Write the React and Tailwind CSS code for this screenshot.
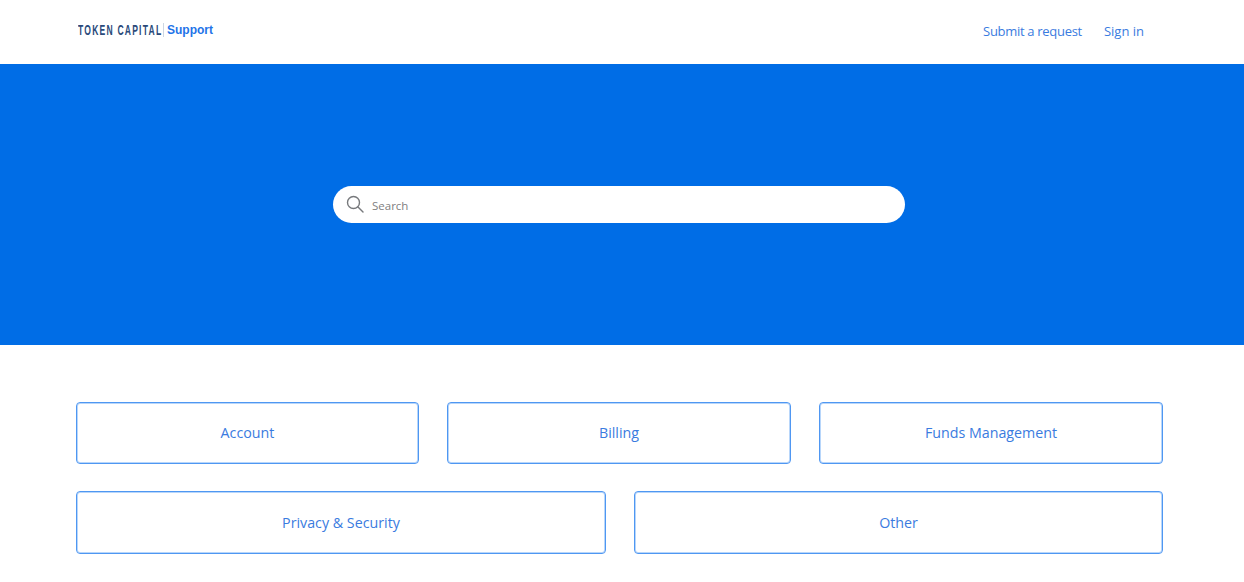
import React from "react";

function Card({ label, className }) {
  return (
    <a className={"flex items-center justify-center rounded-[4px] border border-[#4f97f2] bg-white text-[14.25px] text-[#3a7be0] shadow-[inset_0_0_0_1px_#b8d6fa] " + className}>
      {label}
    </a>
  );
}

export default function App() {
  return (
    <div className="min-h-[582px] bg-white font-['Open_Sans','Noto_Sans',sans-serif] overflow-hidden">
      <header className="flex h-[64px] items-center justify-between pl-[78px] pr-[100px]">
        <div className="flex items-center -mt-[4px]">
          <span className="inline-block w-[85px] origin-left scale-x-[0.61] font-['Liberation_Sans',sans-serif] text-[14px] font-bold tracking-[2px] text-[#2a4a7a] whitespace-nowrap">
            TOKEN CAPITAL
          </span>
          <span className="mr-[3px] h-[14px] w-px bg-[#cdd6e2]" />
          <span className="font-['Liberation_Sans',sans-serif] text-[12px] font-bold text-[#1f74e8]">Support</span>
        </div>
        <nav className="flex items-center gap-[22px] text-[13px] text-[#3a7be0]">
          <a className="tracking-[-0.3px]">Submit a request</a>
          <a>Sign in</a>
        </nav>
      </header>

      <section className="flex h-[281px] items-center justify-center bg-[#006de6]">
        <div className="flex h-[37px] w-[572px] items-center rounded-full bg-white pl-[13px] -mt-[1px] -translate-x-[3px]">
          <svg width="18" height="18" viewBox="0 0 18 18" fill="none" stroke="#77797c" strokeWidth="1.4" strokeLinecap="round">
            <circle cx="7.5" cy="7.5" r="6" />
            <path d="M12 12l5 5" />
          </svg>
          <span className="ml-[8px] mt-[3px] text-[11.5px] text-[#808080]">Search</span>
        </div>
      </section>

      <main className="ml-[76px] mt-[57px] flex w-[1087px] flex-col gap-[27px]">
        <div className="flex gap-[28px]">
          <Card label="Account" className="h-[62px] w-[343px]" />
          <Card label="Billing" className="h-[62px] w-[344px]" />
          <Card label="Funds Management" className="h-[62px] w-[344px]" />
        </div>
        <div className="flex gap-[28px]">
          <Card label="Privacy & Security" className="h-[63px] w-[530px]" />
          <Card label="Other" className="h-[63px] w-[529px]" />
        </div>
      </main>
    </div>
  );
}
